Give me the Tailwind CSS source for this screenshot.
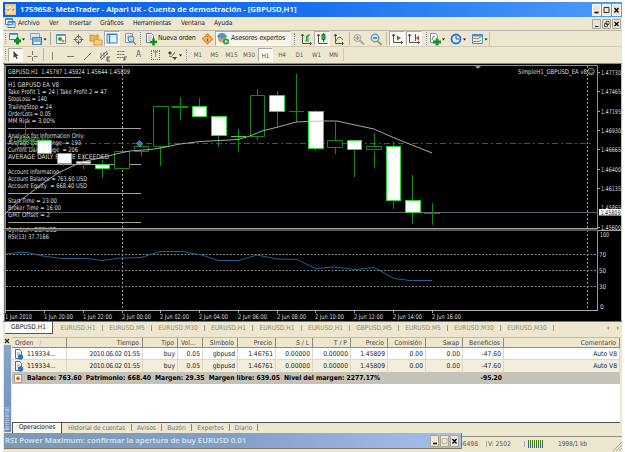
<!DOCTYPE html>
<html lang="es">
<head>
<meta charset="utf-8">
<title>MetaTrader</title>
<script src="https://cdn.jsdelivr.net/npm/@tailwindcss/browser@4"></script>
</head>
<body class="w-[625px] h-[452px] overflow-hidden bg-white">
<div class="w-[625px] h-[452px] pt-[2px] pl-[3px] pr-[3px] overflow-hidden font-['DejaVu_Sans_Condensed','DejaVu_Sans',sans-serif] text-[6.7px] leading-none text-[#222] whitespace-nowrap">
<div class="relative h-[450px] w-[619px] bg-[#eee7cf] flex flex-col">

<!-- title bar -->
<div class="h-[15px] shrink-0 flex items-center bg-linear-to-r from-[#0862e4] via-[#1b70ee] to-[#4d9bf8] text-white pl-[2px] pr-[1px]">
  <svg class="w-[11px] h-[11px] shrink-0" viewBox="0 0 11 11"><rect width="11" height="11" fill="#e9c78e"/><path d="M1 3l2 2 2-3 2 3 3-3M1 7h9M2 9h7" stroke="#fff6d0" fill="none"/><path d="M2 6h2m3 0h2" stroke="#a86b38"/></svg>
  <span class="ml-[4px] font-['Noto_Sans',sans-serif] font-semibold text-[7.8px]">1759658: MetaTrader - Alpari UK - Cuenta de demostración - [GBPUSD,H1]</span>
  <svg class="ml-auto w-[29px] h-[12px]" viewBox="0 0 29 12"><g fill="#ece7d5" stroke="#fff"><path d="M.5.5h8v11h-8zM10.500.5h8v11h-8zM20.500.5h8v11h-8z"/></g><path d="M2.500 8.500h4" stroke="#000" stroke-width="1.500"/><path d="M12 3.500h5v5h-5z" fill="none" stroke="#333"/><path d="M22.500 4l4 4.500m0-4.500l-4 4.500" stroke="#000" stroke-width="1.300"/></svg>
</div>

<!-- menu -->
<div class="h-[14px] shrink-0 flex items-center pl-[2px] pr-[1px] border-b border-[#b9b5a7]">
  <svg class="w-[11px] h-[11px]" viewBox="0 0 11 11"><path d="M.5.5h7v6h-7zM3 3.500h7v6h-7z" fill="#fff" stroke="#4186c6"/><path d="M1 1.500h6M3 4.500h7" stroke="#4a98da"/><path d="M4 7.500l2-1 1 1 2-2" stroke="#499ccc" fill="none"/></svg>
  <span class="ml-[2px] w-[31px] tracking-[-0.15px]">Archivo</span><span class="w-[20px]">Ver</span><span class="w-[31px] tracking-[-0.15px]">Insertar</span><span class="w-[33px] tracking-[-0.15px]">Gráficos</span><span class="w-[48px] tracking-[-0.25px]">Herramientas</span><span class="w-[33px] tracking-[-0.1px]">Ventana</span><span>Ayuda</span>
  <svg class="ml-auto w-[29px] h-[10px]" viewBox="0 0 29 10"><g fill="#e8e3d1" stroke="#aaa698"><path d="M.5.5h8v9h-8zM10.500.5h8v9h-8zM20.500.5h8v9h-8z"/></g><path d="M3 7.500h3.500" stroke="#222"/><path d="M14 2.500h3v3h-3zM12.500 4.500h3v3h-3z" fill="#e8e3d1" stroke="#333" stroke-width=".8"/><path d="M22.500 3l4 4m0-4l-4 4" stroke="#000" stroke-width="1.200"/></svg>
</div>

<!-- main toolbar -->
<div class="h-[16px] shrink-0 flex items-center border-b border-[#d1ccba]">
  <i class="ml-[2px] w-[2px] h-[11px] border-l border-dotted border-[#999]"></i>
  <svg class="w-[20px] h-[14px]" viewBox="0 0 20 14"><path d="M2.500 1.500h8v6h-8z" fill="#e5f0f6" stroke="#4c819f"/><path d="M3 2.500h7" stroke="#5fa0cd"/><path d="M7 9h7M10.500 5.500v7" stroke="#12901e" stroke-width="3"/><path d="M15 6.500h3l-1.500 2z" fill="#111"/></svg>
  <svg class="w-[20px] h-[14px]" viewBox="0 0 20 14"><path d="M3.500 1.500h9v6h-9z" fill="#d8e9f4" stroke="#7ba6c7"/><path d="M5.500 5.500h9v7h-9z" fill="#80b2e0" stroke="#4d7fae"/><path d="M7 10h6v2h-6z" fill="#e6eff4"/><path d="M16.500 6.500h3l-1.500 2z" fill="#111"/></svg>
  <i class="ml-[3px] mr-[2px] w-[1px] h-[13px] bg-[#aaa694]"></i>
  <svg class="w-[16px] h-[14px]" viewBox="0 0 16 14"><path d="M3.500 2.500h9v9h-9z" fill="#fff" stroke="#5695c1"/><path d="M4 3.500h8" stroke="#4e9ae0"/><circle cx="7" cy="7" r="2" fill="#2d9e35"/><circle cx="10" cy="9" r="1.600" fill="#e28a31"/></svg>
  <svg class="w-[18px] h-[14px]" viewBox="0 0 18 14"><circle cx="9.500" cy="7.500" r="3.200" fill="none" stroke="#666"/><path d="M9.500 2.500v4m0 2v4m-5-5h4m2 0h4" stroke="#666"/></svg>
  <svg class="w-[17px] h-[14px]" viewBox="0 0 17 14"><path d="M3 3h3l1 1h4v5h-8z" fill="#f0b65b" stroke="#c38135" stroke-width=".8"/><path d="M7 7h3l1 1h4v5h-8z" fill="#ffd07b" stroke="#c38135" stroke-width=".8"/><path d="M10 1l1 2 2 .3-1.500 1.500.5 2-2-1-1.800 1 .4-2L7 3.300 9.200 3z" fill="#efa545"/></svg>
  <span class="w-[16px] h-[15px] bg-[#fcfaf3] border border-t-[#aaa] border-l-[#aaa] border-b-white border-r-white flex justify-center items-center"><svg class="w-[12px] h-[11px]" viewBox="0 0 12 11"><path d="M1 1h10v9H1z" fill="#e5f3fd" stroke="#3d7ab5"/><path d="M1 1h10v1H1z" fill="#3581cf"/><path d="M3.500 2v8" stroke="#3581cf" stroke-width="1.500"/></svg></span>
  <svg class="w-[18px] h-[14px]" viewBox="0 0 18 14"><path d="M5.500 1.500h7v9h-7z" fill="#f5f9fa" stroke="#789db2"/><path d="M7 4h4M7 6h3" stroke="#83b4d4"/><circle cx="11" cy="7" r="3" fill="#b7d7ef" stroke="#557e9e"/><path d="M13 9.500l3 3" stroke="#b38a41" stroke-width="1.500"/></svg>
  <i class="ml-[2px] mr-[4px] w-[1px] h-[13px] border-l border-dotted border-[#999]"></i>
  <svg class="w-[13px] h-[14px]" viewBox="0 0 13 14"><path d="M1.500 1.500h5l2 2v7h-7z" fill="#fff" stroke="#779"/><path d="M3 4h4M3 6h4M3 8h3" stroke="#6b849a" stroke-width=".7"/><path d="M5 10h7M8.500 6.500v7" stroke="#0d951b" stroke-width="2.600"/></svg>
  <span class="w-[43px] text-[7px] tracking-[-0.25px]">Nueva orden</span>
  <svg class="w-[14px] h-[14px]" viewBox="0 0 14 14"><path d="M6.500 2l5 5-5 5-5-5z" fill="#f6ba68" stroke="#dd8530" stroke-width="1.200"/><path d="M6.500 4v1m0 1.500v3" stroke="#b15312" stroke-width="1.300"/></svg>
  <span class="w-[76px] h-[15px] bg-[#f8f4e8] border border-t-[#aaa] border-l-[#aaa] border-b-white border-r-white flex items-center"><svg class="w-[14px] h-[13px]" viewBox="0 0 14 13"><circle cx="6" cy="6.500" r="4" fill="#d8a352"/><path d="M1 5q1-4 5-4t5 4l-5 2z" fill="#4b97d5"/><circle cx="10" cy="9.500" r="3" fill="#21a332"/><path d="M9 8l3 1.500L9 11z" fill="#fff"/></svg><span class="text-[7px] ml-[1px] tracking-[-0.22px]">Asesores expertos</span></span>
  <i class="ml-[3px] mr-[2px] w-[2px] h-[12px] border-l border-dotted border-[#888]"></i>
  <svg class="w-[16px] h-[14px]" viewBox="0 0 16 14"><path d="M4.500 2v9.500h9M3 4l1.500-2L6 4m6 6l1.500 1.500L12 13" stroke="#555" fill="none"/><path d="M7 9h1.500V4H10m0 6V3h2" stroke="#139727" fill="none"/></svg>
  <span class="w-[16px] h-[15px] bg-[#faf7ee] border border-t-[#aaa] border-l-[#aaa] border-b-white border-r-white"><svg class="w-[14px] h-[13px]" viewBox="0 0 14 13"><path d="M3.500 2v9.500h9M2 4l1.500-2L5 4" stroke="#555" fill="none"/><path d="M8.500 1v9" stroke="#075d15"/><path d="M7 2.500h3v5H7z" fill="#29b73e" stroke="#078319"/></svg></span>
  <svg class="w-[19px] h-[14px]" viewBox="0 0 19 14"><path d="M5.500 2v9.500h8M4 4l1.500-2L7 4m5 6l1.500 1.500L12 13" stroke="#555" fill="none"/><path d="M6 9q3-7 7-1" stroke="#289d36" fill="none"/></svg>
  <i class="mr-[1px] w-[1px] h-[13px] bg-[#bbb6a5]"></i>
  <svg class="w-[18px] h-[14px]" viewBox="0 0 18 14"><circle cx="6.500" cy="6" r="3.500" fill="#ddd9cb" stroke="#aaa69a"/><path d="M4.500 6h4M6.500 4v4" stroke="#999"/><path d="M9 8.500l4 4" stroke="#aaa69a" stroke-width="2"/></svg>
  <svg class="w-[16px] h-[14px]" viewBox="0 0 16 14"><circle cx="6" cy="6" r="3.800" fill="#cce7fb" stroke="#4b94c8" stroke-width="1.200"/><path d="M4 6h4" stroke="#2163b5" stroke-width="1.300"/><path d="M8.500 9l4 4" stroke="#c99438" stroke-width="2"/></svg>
  <i class="ml-[1px] mr-[2px] w-[1px] h-[13px] bg-[#bbb6a5]"></i>
  <span class="w-[16px] h-[15px] bg-[#faf7ee] border border-t-[#aaa] border-l-[#aaa] border-b-white border-r-white"><svg class="w-[14px] h-[13px]" viewBox="0 0 14 13"><path d="M3.500 2v8.500h9M2 4l1.500-2L5 4m6 5l1.500 1.500L11 12" stroke="#555" fill="none"/><path d="M7 3.500l4 2.500-4 2.500z" fill="#159a2a"/></svg></span>
  <span class="ml-[1px] w-[16px] h-[15px] bg-[#faf7ee] border border-t-[#aaa] border-l-[#aaa] border-b-white border-r-white"><svg class="w-[14px] h-[13px]" viewBox="0 0 14 13"><path d="M2.500 2v8.500h10M1 4l1.500-2L4 4m7 5l1.500 1.500L11 12M8.500 2v7" stroke="#555" fill="none"/><path d="M12 3.500L9 6l3 2.500z" fill="#bc4630"/></svg></span>
  <i class="ml-[4px] w-[1px] h-[13px] border-l border-dotted border-[#999]"></i>
  <svg class="w-[20px] h-[14px]" viewBox="0 0 20 14"><path d="M3.500 1.500h5l2 2v7h-7z" fill="#f8f8f8" stroke="#8992a0"/><path d="M5 8q1-5 3-4" stroke="#777" fill="none"/><path d="M6 10h8M10 6.500v7" stroke="#11951c" stroke-width="2.800"/><path d="M15 6.500h3l-1.500 2z" fill="#111"/></svg>
  <svg class="w-[21px] h-[14px]" viewBox="0 0 21 14"><circle cx="9" cy="7" r="4.500" fill="#dceffc" stroke="#2a73c7" stroke-width="1.800"/><path d="M9 4v3h3" stroke="#245797" fill="none"/><path d="M16 6.500h3l-1.500 2z" fill="#111"/></svg>
  <svg class="w-[20px] h-[14px]" viewBox="0 0 20 14"><path d="M4.500 2.500h10v9h-10z" fill="#f4f8f6" stroke="#5690b6"/><path d="M4 3.500h11" stroke="#438bc9" stroke-width="2"/><path d="M5 7l2-1 2 1 4-2" stroke="#d05334" fill="none"/><path d="M5 10l3-1 2 1 3-2" stroke="#38a04a" fill="none"/><path d="M16.500 6.500h3l-1.500 2z" fill="#111"/></svg>
  <i class="ml-[1px] w-[1px] h-[14px] bg-[#c5bfae]"></i>
</div>

<!-- drawing and period toolbar -->
<div class="h-[15px] shrink-0 flex items-center text-[6.2px] text-[#555]">
  <i class="ml-[2px] w-[2px] h-[11px] border-l border-dotted border-[#999]"></i>
  <span class="ml-[1px] w-[15px] h-[14px] bg-[#faf7ee] border border-t-[#aaa] border-l-[#aaa] border-b-white border-r-white"><svg class="w-[13px] h-[12px]" viewBox="0 0 13 12"><path d="M4.500 2v7l1.600-1.500L7.500 10l1.200-.6L7.500 7h2z" fill="#444"/></svg></span>
  <svg class="w-[18px] h-[14px]" viewBox="0 0 18 14"><path d="M9.500 3v4m0 2v4M4.500 8.500h4m2 0h4" stroke="#777"/></svg>
  <i class="ml-[2px] w-[1px] h-[13px] bg-[#bbb6a5]"></i>
  <svg class="w-[18px] h-[14px]" viewBox="0 0 18 14"><path d="M8.500 4v8" stroke="#888"/></svg>
  <svg class="w-[17px] h-[14px]" viewBox="0 0 17 14"><path d="M5 8.500h7" stroke="#777"/></svg>
  <svg class="w-[17px] h-[14px]" viewBox="0 0 17 14"><path d="M5 12l7-7" stroke="#777"/></svg>
  <svg class="w-[17px] h-[14px]" viewBox="0 0 17 14"><path d="M4 10l7-7M5 12l7-7M5 5v6m3-7v6m3-7v4" stroke="#666" fill="none" stroke-width=".8"/><path d="M14 9h-3v4h3m-3-2h2" stroke="#333" fill="none" stroke-width=".8"/></svg>
  <svg class="w-[17px] h-[14px]" viewBox="0 0 17 14"><path d="M4 3.500h8M4 6.500h8M4 9.500h6" stroke="#777" stroke-dasharray="2 .5"/><path d="M14 9h-3v4m0-2h2" stroke="#333" fill="none" stroke-width=".8"/></svg>
  <span class="w-[17px] pt-[1px] text-center text-[8px]">A</span>
  <span class="w-[17px] pt-[1px] flex justify-center"><b class="w-[9px] h-[10px] border border-dotted border-[#777] text-center text-[7.5px] leading-[8px] font-normal">T</b></span>
  <svg class="w-[20px] h-[14px]" viewBox="0 0 20 14"><path d="M4 5l2-2 2 2-2 2zM8 9h5l-2 3z" fill="#444"/><path d="M5 8l2 1 4-5" stroke="#666" fill="none"/><path d="M15 6.500h3l-1.500 2z" fill="#111"/></svg>
  <i class="ml-[2px] mr-[2px] w-[2px] h-[12px] border-l border-dotted border-[#999]"></i>
  <span class="w-[16px] pt-[2px] text-center">M1</span><span class="w-[17px] pt-[2px] text-center">M5</span><span class="w-[17px] pt-[2px] text-center">M15</span><span class="w-[18px] pt-[2px] text-center">M30</span><span class="w-[15px] h-[14px] leading-[13px] text-center bg-[#faf7ee] border border-t-[#aaa] border-l-[#aaa] border-b-white border-r-white">H1</span><span class="w-[18px] pt-[2px] text-center">H4</span><span class="w-[17px] pt-[2px] text-center">D1</span><span class="w-[17px] pt-[2px] text-center">W1</span><span class="w-[17px] pt-[2px] text-center">MN</span>
  <i class="ml-[1px] w-[1px] h-[13px] bg-[#ccc7b6]"></i>
</div>

<!-- price chart and RSI -->
<svg id="chart" class="block shrink-0 w-[619px] h-[259px] font-['DejaVu_Sans_Condensed','DejaVu_Sans',sans-serif]" viewBox="3 62 619 259" font-size="6.5" fill="#dadada">
  <rect x="3" y="62" width="619" height="1" fill="#eee7cf"/><rect x="3" y="63" width="619" height="1" fill="#8c8a80"/>
  <rect x="4" y="64" width="617" height="257" fill="#000"/>
  <path d="M4.500 321V64.500" stroke="#77756d" stroke-width="1"/>
  <path d="M5.500 310V65.500H597.500V310.500" fill="none" stroke="#8f8f8f"/>
  <path d="M621.500 64v257" stroke="#c5c0ae"/>
  <path d="M122.500 66v244M587.500 66v244" stroke="#999" stroke-dasharray="2 2"/>
  <path d="M6 212.500H598" stroke="#586370"/>
  <path d="M6 143.500H594" stroke="#087f0a" stroke-dasharray="6 3 2 3"/>
  <g>
    <text x="8" y="73.500" textLength="122">GBPUSD,H1&#160; 1.45797 1.45924 1.45644 1.45809</text>
    <text x="8" y="86.500" textLength="51">H1 GBPUSD EA V8</text>
    <text x="8" y="94" textLength="99">Take Profit 1 = 24 | Take Profit 2 = 47</text>
    <text x="8" y="101" textLength="39">StopLoss = 140</text>
    <text x="8" y="108.500" textLength="44">TrailingStop = 24</text>
    <text x="8" y="115.500" textLength="43">OrderLots = 0.05</text>
    <text x="8" y="123" textLength="47">MM Risk = 3.00%</text>
    <text x="8" y="137.500" textLength="77">Analysis for Information Only:</text>
    <text x="8" y="144.500" textLength="73">Average Daily Range&#160; = 193</text>
    <text x="8" y="152" textLength="70">Current Daily Range&#160; = 206</text>
    <text x="8" y="159" textLength="101">AVERAGE DAILY RANGE EXCEEDED</text>
    <text x="8" y="173.500" textLength="53">Account Information:</text>
    <text x="8" y="181" textLength="79">Account Balance = 763.60 USD</text>
    <text x="8" y="188" textLength="79">Account Equity&#160; = 668.40 USD</text>
    <text x="8" y="202.500" textLength="49">Start Time = 23:00</text>
    <text x="8" y="210" textLength="53">Broker Time = 16:00</text>
    <text x="8" y="217" textLength="42">GMT Offset = 2</text>
    <text x="8" y="232" textLength="49">Symbol : GBPUSD</text>
    <text x="9" y="141.500" textLength="41" fill="#aaa">#119334900 buy</text>
  </g>
  <path d="M8 77.500h73M8 128.500h133M8 164.500h133M8 193.500h133M8 222.500h133" stroke="#a2a2a2"/>
  <!-- candles -->
  <g stroke="#0b8b12" fill="none">
    <path d="M25.500 121v19M63.500 163v3M83.500 158v11M102.500 160v18M141.500 142v4M141.500 151v5M160.500 147v19M180.500 97v23M199.500 98v9M218.500 136v11M238.500 129v23M257.500 89v6M257.500 137v3M277.500 91v36M296.500 74v48M315.500 110v41M335.500 122v18M335.500 148v6M354.500 150v27M374.500 133v13M374.500 151v17M393.500 142v67M412.500 175v49M432.500 203v22"/>
    <path d="M17.500 140.500h15v7h-15z"/>
    <path d="M114.500 151.500h15v17h-15zM134.500 146.500h14v5h-14zM153.500 106.500h15v40h-15zM250.500 95.500h14v41h-14zM327.500 140.500h15v7h-15zM366.500 146.500h15v3h-15z" fill="#000"/>
    <path d="M172 107.500h16M289 111.500h15M424 213.500h16M172 106.500h16"/>
  </g>
  <g stroke="#20e52b" fill="#fff">
    <path d="M5.500 125v25M231 136.500h15"/>
    <path d="M37.500 140.500h14v13h-14zM57.500 153.500h14v10h-14zM76.500 161.500h14v2h-14zM95.500 164.500h14v4h-14zM192.500 106.500h14v10h-14zM211.500 116.500h15v19h-15zM269.500 95.500h15v16h-15zM308.500 111.500h15v37h-15zM347.500 140.500h14v9h-14zM386.500 146.500h14v54h-14zM405.500 200.500h15v12h-15z"/>
  </g>
  <polyline points="5,214 17,203 42,184 58,173 75,165 86,161 100,158 118,153.500 130,151 150,149.500 158,148.500 180,144 200,141.500 220,140.500 238,139.500 250,136 262,131 280,126.500 296,122 308,121.500 325,121 337,121 355,125 374,129 392,137 412,145 432,153" fill="none" stroke="#bbb" stroke-width=".9"/>
  <path d="M139.500 140.500l3 3-3 3-3-3z" fill="#1d73df" stroke="#67b0f5" stroke-width=".7"/>
  <path d="M475 66h6l-3 3z" fill="#8695a6"/>
  <text x="518" y="73.500" textLength="69">SimpleH1_GBPUSD_EA v8</text>
  <circle cx="591" cy="71.500" r="3.300" fill="none" stroke="#bbb" stroke-width=".8"/><path d="M589.500 70.500h1m1 0h1M589 72.500q2 2 4 0" fill="none" stroke="#bbb" stroke-width=".7"/>
  <path d="M598 72.500h2M598 91.500h2M598 111.500h2M598 130.500h2M598 149.500h2M598 169.500h2M598 188.500h2M598 227.500h2" stroke="#aaa"/>
  <text x="601" y="74.500" textLength="20">1.47730</text><text x="601" y="94" textLength="20">1.47465</text><text x="601" y="113.500" textLength="20">1.47195</text><text x="601" y="132.500" textLength="20">1.46930</text><text x="601" y="152" textLength="20">1.46665</text><text x="601" y="171.500" textLength="20">1.46400</text><text x="601" y="190.500" textLength="20">1.46135</text><text x="601" y="210" textLength="20">1.45865</text><text x="601" y="229.500" textLength="20">1.45600</text>
  <rect x="599" y="209" width="23" height="6.500" fill="#fff"/><text x="600.500" y="214.700" textLength="20" fill="#222">1.45809</text>
  <!-- RSI pane -->
  <rect x="5" y="228" width="593" height="3" fill="#555"/><path d="M5 228.500h593M598 230.500h23" stroke="#a5a297"/><rect x="597" y="231" width="1" height="80" fill="#999"/>
  <path d="M6 254.500h591M6 270.500h591M6 286.500h591" stroke="#858585" stroke-dasharray="2 1.500"/>
  <text x="8" y="239" textLength="41">RSI(13) 37.7166</text>
  <polyline points="6,254 18,252.500 27,252.500 43,256 62,258.500 87,258.500 102,260.500 121,258 141,257.500 160,251.500 182,251.500 202,255 218,260.500 239,260.500 257,255 277,259 297,259.500 310,266 316,268.500 335,267 355,269.500 374,267.500 394,278.500 410,280.500 432,280.500" fill="none" stroke="#19629c"/>
  <text x="600" y="236.700" textLength="9">100</text><text x="599" y="257" textLength="7">70</text><text x="599" y="273" textLength="7">50</text><text x="599" y="289" textLength="7">30</text><text x="600" y="309">0</text>
  <path d="M5 310.500h593" stroke="#aaa"/>
  <path d="M5.500 310v3M44.500 310v3M83.500 310v3M122.500 310v3M160.500 310v3M199.500 310v3M238.500 310v3M277.500 310v3M315.500 310v3M354.500 310v3M393.500 310v3M432.500 310v3" stroke="#aaa"/>
  <text x="5" y="318.500" textLength="27">1 Jun 2010</text><text x="44" y="318.500" textLength="29">1 Jun 20:00</text><text x="83" y="318.500" textLength="29">1 Jun 22:00</text><text x="122" y="318.500" textLength="29">2 Jun 00:00</text><text x="160" y="318.500" textLength="29">2 Jun 02:00</text><text x="199" y="318.500" textLength="29">2 Jun 04:00</text><text x="238" y="318.500" textLength="29">2 Jun 06:00</text><text x="277" y="318.500" textLength="29">2 Jun 08:00</text><text x="315" y="318.500" textLength="29">2 Jun 10:00</text><text x="354" y="318.500" textLength="29">2 Jun 12:00</text><text x="393" y="318.500" textLength="29">2 Jun 14:00</text><text x="432" y="318.500" textLength="29">2 Jun 16:00</text>
</svg>

<!-- chart tabs -->
<div class="h-[13px] shrink-0 flex items-center text-[#8d897d] border-t border-[#777] text-[6.6px]">
  <span class="ml-[2px] mr-[1px] w-[48px] h-[12px] leading-[11px] text-center bg-white text-[#222] border-r border-b border-[#555]">GBPUSD,H1</span>
  <span class="w-[49px] text-center border-r border-[#999]">EURUSD,H1</span><span class="w-[49px] text-center border-r border-[#999]">EURUSD,M5</span><span class="w-[53px] text-center border-r border-[#999]">EURUSD,M30</span><span class="w-[48px] text-center border-r border-[#999]">EURUSD,H1</span><span class="w-[49px] text-center border-r border-[#999]">EURUSD,H1</span><span class="w-[48px] text-center border-r border-[#999]">EURUSD,H1</span><span class="w-[49px] text-center border-r border-[#999]">GBPUSD,M5</span><span class="w-[49px] text-center border-r border-[#999]">EURUSD,M5</span><span class="w-[53px] text-center border-r border-[#999]">EURUSD,M30</span><span class="w-[53px] text-center border-r border-[#999]">EURUSD,M30</span>
  <svg class="ml-auto mr-[1px] w-[16px] h-[8px]" viewBox="0 0 16 8"><path d="M4 2v4L2 4zM12 2v4l2-2z" fill="#9c9889"/></svg>
</div>

<!-- terminal -->
<div class="h-[98px] shrink-0 flex pt-[3px]">
  <div class="w-[8px] flex flex-col items-center">
    <svg class="w-[6px] h-[8px]" viewBox="0 0 6 8"><path d="M1 2l4 4m0-4L1 6" stroke="#222" stroke-width="1.200"/></svg>
    <div class="w-[7px] flex-1 bg-linear-to-b from-[#8ba5ca] to-[#718fb7] text-[#d7dfed] text-[6.500px] flex flex-col justify-end overflow-hidden"><span class="[writing-mode:vertical-rl] rotate-180 leading-[7px]">Terminal</span></div>
  </div>
  <div class="flex-1 ml-[1px] mr-[2px] flex flex-col">
    <div class="h-[86px] bg-white border-b border-[#555]">
      <div class="h-[11px] grid grid-cols-[55px_76px_35px_25px_35px_38px_37px_38px_37px_38px_37px_41px_116px] bg-[#eee7cf] border-t border-b border-t-[#bbb] border-b-[#8f8b7e] leading-[10px] text-right text-[#444] *:border-r *:border-[#8f8b7e] *:pr-[3px]">
        <span class="text-left pl-[3px]">Orden <span class="text-[#aaa] ml-[4px]">∕</span></span><span>Tiempo</span><span>Tipo</span><span class="text-left pl-[3px]">Vol...</span><span>Símbolo</span><span>Precio</span><span>S / L</span><span>T / P</span><span>Precio</span><span>Comisión</span><span>Swap</span><span>Beneficios</span><span>Comentario</span>
      </div>
      <div class="h-[12px] grid grid-cols-[55px_76px_35px_25px_35px_38px_37px_38px_37px_38px_37px_41px_116px] leading-[13px] text-right border-b border-[#ddd8c5] *:border-r *:border-[#ddd8c5] *:pr-[2px]">
        <span class="flex items-center"><svg class="ml-[2px] mr-[3px] w-[10px] h-[11px]" viewBox="0 0 10 11"><path d="M1.500.5h4l2 2v7h-6z" fill="#fff" stroke="#667"/><path d="M3 4h3M3 6h2" stroke="#778" stroke-width=".7"/><circle cx="6.500" cy="8" r="2.700" fill="#2774cd"/></svg>119334...</span><span class="tracking-[-0.2px]">2010.06.02 01:55</span><span>buy</span><span>0.05</span><span>gbpusd</span><span>1.46761</span><span>0.00000</span><span>0.00000</span><span>1.45809</span><span>0.00</span><span>0.00</span><span>-47.60</span><span>Auto V8</span>
      </div>
      <div class="h-[12px] grid grid-cols-[55px_76px_35px_25px_35px_38px_37px_38px_37px_38px_37px_41px_116px] leading-[13px] text-right bg-[#f3eedb] *:border-r *:border-[#ddd8c5] *:pr-[2px]">
        <span class="flex items-center"><svg class="ml-[2px] mr-[3px] w-[10px] h-[11px]" viewBox="0 0 10 11"><path d="M1.500.5h4l2 2v7h-6z" fill="#fff" stroke="#667"/><path d="M3 4h3M3 6h2" stroke="#778" stroke-width=".7"/><circle cx="6.500" cy="8" r="2.700" fill="#2774cd"/></svg>119334...</span><span class="tracking-[-0.2px]">2010.06.02 01:55</span><span>buy</span><span>0.05</span><span>gbpusd</span><span>1.46761</span><span>0.00000</span><span>0.00000</span><span>1.45809</span><span>0.00</span><span>0.00</span><span>-47.60</span><span>Auto V8</span>
      </div>
      <div class="h-[12px] flex items-center bg-[#c5c2b8] font-bold text-black">
        <svg class="ml-[2px] mr-[5px] w-[8px] h-[9px]" viewBox="0 0 8 9"><path d="M.5.5h7v8h-7z" fill="#fff" stroke="#a89b86"/><path d="M4 2l2.500 2.500L4 7 1.500 4.500z" fill="#d56b1e"/></svg>
        <span class="text-[6.75px] w-[430px] tracking-[-0.02px]">Balance: 763.60&#160; Patrimonio: 668.40&#160; Margen: 29.35&#160; Margen libre: 639.05&#160; Nivel del margen: 2277.17%</span>
        <span class="w-[45px] text-right">-95.20</span>
      </div>
    </div>
    <div class="h-[9px] flex items-center text-[#777]">
      <span class="w-[50px] h-[10px] leading-[9px] text-center bg-[#faf7ec] text-[#222] border-x border-[#555] tracking-[-0.1px]">Operaciones</span><span class="w-[70px] pt-[1px] text-center border-r border-[#888] tracking-[-0.15px]">Historial de cuentas</span><span class="w-[30px] pt-[1px] text-center border-r border-[#888]">Avisos</span><span class="w-[30px] pt-[1px] text-center border-r border-[#888]">Buzón</span><span class="w-[38px] pt-[1px] text-center border-r border-[#888]">Expertos</span><span class="w-[28px] pt-[1px] text-center border-r border-[#888]">Diario</span>
    </div>
  </div>
</div>

<!-- alert window bar and connection status -->
<div class="flex-1 flex items-start pt-[1px]">
  <div class="ml-[1px] w-[458px] h-[16px] flex items-center bg-linear-to-r from-[#7c99b5] via-[#829fca] to-[#a4c0f0] text-[#d8e2ef] pl-[1px] border-r border-b border-[#77756c]">
    <span class="font-['Noto_Sans',sans-serif] font-semibold text-[7.75px]">RSI Power Maximum: confirmar la apertura de buy EURUSD 0.01</span>
    <svg class="ml-auto mr-[2px] w-[29px] h-[12px]" viewBox="0 0 29 12"><g fill="#ece7d5" stroke="#aaa795"><path d="M.5.5h8v11h-8zM10.500.5h8v11h-8zM20.500.5h8v11h-8z"/></g><path d="M3 8.500h4" stroke="#000" stroke-width="1.500"/><path d="M12 3.500h5v5h-5z" fill="none" stroke="#bcb8aa"/><path d="M22.500 4l4 4.500m0-4.500l-4 4.500" stroke="#000" stroke-width="1.300"/></svg>
  </div>
  <div class="mt-[3px] flex-1 h-[15px] flex items-center border-t border-[#8f8c80] text-[#555]">
    <span class="w-[25px] flex justify-end overflow-hidden pr-[8px] border-r border-[#aaa]">96498</span><span class="w-[38px] pl-[1px] border-r border-[#aaa]">V: 2502</span>
    <svg class="ml-[3px] w-[16px] h-[9px]" viewBox="0 0 16 9"><path d="M.5 0v8m2-8v8m2-8v8m2-8v8m2-8v8m2-8v8m2-8v8m2-8v8" stroke="#45721d"/><path d="M.5 4v4m2-3v3m2-2v2m4-3v3m4-5v5m2-5v5" stroke="#335a91"/></svg>
    <span class="ml-[14px] tracking-[-0.15px]">1998/1 kb</span>
    <svg class="ml-auto self-end w-[9px] h-[9px]" viewBox="0 0 9 9"><path d="M0 9l9-9M3 9l6-6M6 9l3-3" stroke="#aaa693"/></svg>
  </div>
</div>
</div>
</div>
<script>
// Scale glyphs together with their spacing in every chart label
document.querySelectorAll('#chart text[textLength]').forEach(t => t.setAttribute('lengthAdjust', 'spacingAndGlyphs'));
</script>
</body>
</html>
